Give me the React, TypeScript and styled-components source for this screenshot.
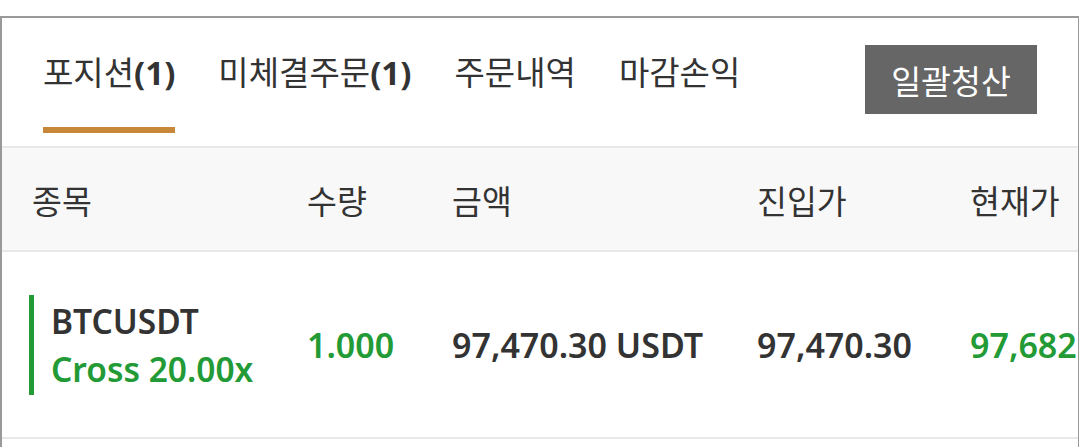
import styled, { createGlobalStyle } from 'styled-components';

const GlobalStyle = createGlobalStyle`
  html, body {
    margin: 0;
    padding: 0;
    background: #fff;
  }
  body {
    font-family: "Noto Sans", "Noto Sans CJK KR", sans-serif;
    color: #333;
  }
`;

const Page = styled.div`
  padding-top: 16px;
  height: 447px;
  box-sizing: border-box;
  overflow: hidden;
`;

const Card = styled.div`
  width: 1079px;
  box-sizing: border-box;
  border-top: 2px solid #999;
  border-left: 2px solid #999;
  border-right: 1px solid #999;
  height: 431px;
  overflow: hidden;
`;

const TabBar = styled.div`
  height: 128px;
  display: flex;
  align-items: flex-start;
  padding: 0 41px 0 41px;
  border-bottom: 2px solid #e8e8e8;
`;

const Tabs = styled.div`
  display: flex;
  gap: 43px;
`;

const Tab = styled.div<{ $active?: boolean }>`
  height: 115px;
  box-sizing: border-box;
  padding-top: 31px;
  font-family: "Noto Sans CJK KR", sans-serif;
  font-size: 33px;
  line-height: 44px;
  color: #333;
  white-space: nowrap;
  border-bottom: 6px solid ${(p) => (p.$active ? '#c8883a' : 'transparent')};
`;

const Count = styled.span`
  font-family: "Noto Sans", sans-serif;
  font-weight: 700;
`;

const CloseAllButton = styled.button`
  margin: 27px 0 0 auto;
  width: 172px;
  height: 69px;
  border: none;
  border-radius: 0;
  background: #666;
  color: #fff;
  font-family: "Noto Sans CJK KR", sans-serif;
  font-size: 32.5px;
  padding: 0;
  cursor: pointer;
`;

const Row = styled.div<{ $head?: boolean }>`
  display: grid;
  grid-template-columns: 275px 145px 305px 213px auto;
  align-items: center;
  padding-left: 30px;
  height: ${(p) => (p.$head ? '102px' : '185px')};
  background: ${(p) => (p.$head ? '#f8f8f8' : '#fff')};
  border-bottom: 2px solid #e8e8e8;
`;

const HeadCell = styled.div`
  font-family: "Noto Sans CJK KR", sans-serif;
  font-size: 32.5px;
  color: #333;
  white-space: nowrap;
`;

const Cell = styled.div<{ $green?: boolean }>`
  font-size: 34px;
  font-weight: 600;
  color: ${(p) => (p.$green ? '#229a35' : '#333')};
  white-space: nowrap;
`;

const SymbolCell = styled.div`
  margin-left: -3px;
  border-left: 5px solid #229a35;
  padding: 2px 0 2px 17px;
  display: flex;
  flex-direction: column;
`;

const SymbolName = styled.span`
  font-size: 33.5px;
  font-weight: 600;
  line-height: 48px;
  color: #333;
`;

const Leverage = styled.span`
  font-size: 33.5px;
  font-weight: 600;
  line-height: 48px;
  color: #229a35;
`;

const tabs = [
  { label: '포지션', count: 1, active: true },
  { label: '미체결주문', count: 1 },
  { label: '주문내역' },
  { label: '마감손익' },
];

const App = () => (
  <>
    <GlobalStyle />
    <Page>
      <Card>
        <TabBar>
          <Tabs>
            {tabs.map((t) => (
              <Tab key={t.label} $active={t.active}>
                {t.label}
                {t.count !== undefined && <Count>({t.count})</Count>}
              </Tab>
            ))}
          </Tabs>
          <CloseAllButton>일괄청산</CloseAllButton>
        </TabBar>
        <Row $head>
          <HeadCell>종목</HeadCell>
          <HeadCell>수량</HeadCell>
          <HeadCell>금액</HeadCell>
          <HeadCell>진입가</HeadCell>
          <HeadCell>현재가</HeadCell>
        </Row>
        <Row>
          <SymbolCell>
            <SymbolName>BTCUSDT</SymbolName>
            <Leverage>Cross 20.00x</Leverage>
          </SymbolCell>
          <Cell $green>1.000</Cell>
          <Cell>97,470.30 USDT</Cell>
          <Cell>97,470.30</Cell>
          <Cell $green>97,682.50</Cell>
        </Row>
      </Card>
    </Page>
  </>
);

export default App;
